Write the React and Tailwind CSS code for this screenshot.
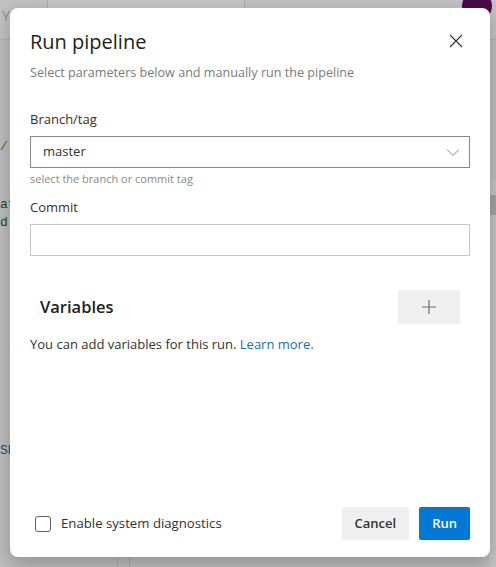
import React from "react";

export default function App() {
  return (
    <div
      className="relative w-[496px] h-[567px] overflow-hidden bg-[#bdbdbd]"
      style={{ fontFamily: '"Open Sans", "Noto Sans", sans-serif' }}
    >
      {/* dimmed background page */}
      <div className="flex flex-col h-full">
        <div className="h-[40px] bg-[#c2c2c2] border-b border-[#b0b0b0] flex items-start">
          <span className="text-[14px] text-[#8a8a8a] mt-[5px] ml-[2px]">Y</span>
          <div className="ml-[37px] w-[198px] h-[10px] border border-[#adadad] border-t-0 rounded-b-[2px] bg-[#c6c6c6]" />
          <div className="ml-auto mr-[4px] -mt-[9px] w-[30px] h-[30px] rounded-full bg-[#4a0c4a]" />
        </div>
        <div className="flex-1 flex">
          <div className="w-[10px] flex flex-col text-[13px] leading-[18px] font-mono">
            <span className="mt-[98px] text-[#6d5a2c]">/</span>
            <span className="mt-[40px] text-[#155015]">at</span>
            <span className="text-[#155015]">d</span>
            <span className="mt-[210px] text-[#1c4e8a]">SD</span>
          </div>
          <div className="flex-1" />
          <div className="w-[6px] mt-[140px] flex flex-col bg-[#c4c4c4]">
            <div className="mt-[15px] h-[20px] bg-[#a3a3a3]" />
          </div>
        </div>
      </div>
      <div className="absolute left-[117px] top-[557px] w-[13px] h-[10px] border-x border-[#a8a8a8]" />

      {/* modal */}
      <div className="absolute left-[10px] top-[8px] w-[480px] h-[549px] bg-white rounded-[8px] shadow-[0_6px_20px_rgba(0,0,0,0.25)] flex flex-col px-5 pt-[20px] pb-[17px]">
        <div className="flex items-start justify-between">
          <h1 className="text-[20px] leading-[28px] text-[#201f1e] font-normal">Run pipeline</h1>
          <button className="mt-[6px] mr-[7px] w-[14px] h-[14px] text-[#323130]">
            <svg viewBox="0 0 14 14" width="14" height="14" fill="none" stroke="currentColor" strokeWidth="1.1">
              <path d="M1 1L13 13M13 1L1 13" />
            </svg>
          </button>
        </div>
        <p className="mt-[9px] text-[12.6px] leading-[16px] text-[#7a7a7a]">
          Select parameters below and manually run the pipeline
        </p>

        <label className="mt-[29px] text-[13px] leading-[18px] text-[#323130]">Branch/tag</label>
        <div className="mt-[8px] h-[32px] border border-[#8a8886] flex items-center pl-[12px] pr-[8px]">
          <span className="text-[13px] text-[#323130]">master</span>
          <svg className="ml-auto" viewBox="0 0 16 16" width="16" height="16" fill="none" stroke="#8a8886" strokeWidth="1">
            <path d="M2 5.5L8 11.5L14 5.5" />
          </svg>
        </div>
        <p className="mt-[4px] text-[11px] leading-[14px] text-[#8a8886]">select the branch or commit tag</p>

        <label className="mt-[12px] text-[13px] leading-[18px] text-[#323130]">Commit</label>
        <div className="mt-[8px] h-[32px] border border-[#c8c6c4]" />

        <div className="mt-[34px] flex items-center justify-between pl-[10px] pr-[10px]">
          <h2 className="text-[16.5px] leading-[24px] font-semibold text-[#201f1e]">Variables</h2>
          <button className="w-[62px] h-[34px] bg-[#efefef] rounded-[2px] flex items-center justify-center">
            <svg viewBox="0 0 16 16" width="16" height="16" fill="none" stroke="#6e6e6e" strokeWidth="1.2">
              <path d="M8 1V15M1 8H15" />
            </svg>
          </button>
        </div>
        <p className="mt-[11px] text-[13px] leading-[18px] text-[#323130]">
          You can add variables for this run. <span className="text-[#106ebe]">Learn more.</span>
        </p>

        <div className="mt-auto flex items-center">
          <div className="ml-[5px] w-[16px] h-[16px] rounded-[3px] border border-[#605e5c]" />
          <span className="ml-[10px] text-[13.2px] text-[#323130]">Enable system diagnostics</span>
          <button className="ml-auto h-[33px] px-[13px] bg-[#efefef] rounded-[2px] text-[13px] font-semibold text-[#323130]">
            Cancel
          </button>
          <button className="ml-[10px] h-[33px] px-[13px] bg-[#0078d4] rounded-[2px] text-[13px] font-semibold text-white">
            Run
          </button>
        </div>
      </div>
    </div>
  );
}
